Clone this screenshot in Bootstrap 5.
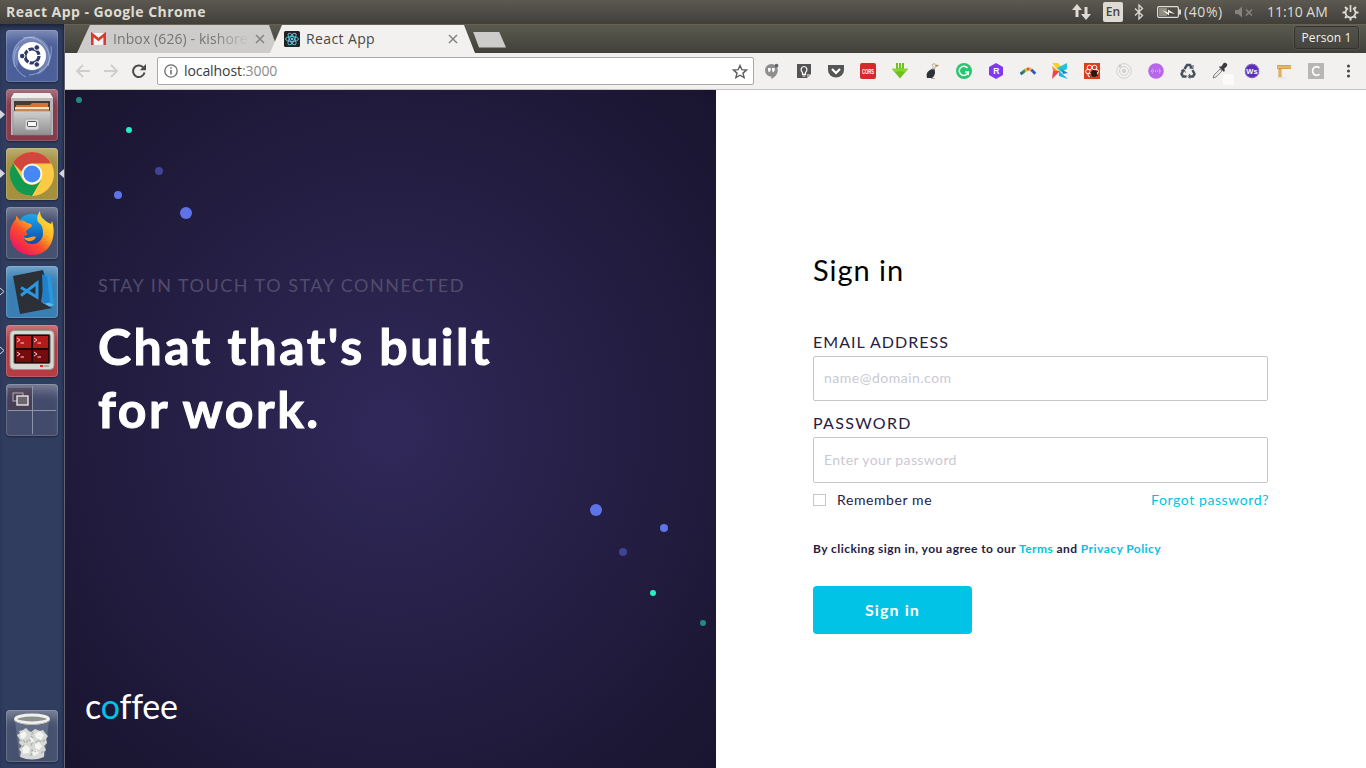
<!DOCTYPE html>
<html lang="en">
<head>
<meta charset="utf-8">
<title>React App</title>
<meta name="viewport" content="width=device-width, initial-scale=1">
<link href="https://cdn.jsdelivr.net/npm/bootstrap@5.3.0/dist/css/bootstrap.min.css" rel="stylesheet">
<style>
  html, body { height: 100%; overflow: hidden; }
  body { font-family: "Open Sans", "Noto Sans", sans-serif; font-size: 14px; line-height: 1.2; background: #fff; }
  svg { display: block; flex: none; overflow: visible; }

  /* system bar */
  .sysbar { height: 24px; background: linear-gradient(#5c5950, #403f3a); color: #dfdbd2; padding-left: 6px; }
  .sys-title { font-weight: 700; font-size: 14px; letter-spacing: .45px; }
  .sys-tray { display: grid; grid-template-columns: 31px 31px 23px 27px 51px 32px 75px 24px; align-items: center; height: 24px; }
  .pct { letter-spacing: .6px; }
  .lang-box { width: 20px; height: 20px; background: #dfdbd2; color: #46443e; border-radius: 2px; font-size: 12px; font-weight: 600; }

  /* launcher */
  .dock { width: 65px; background: #303d5f; border-right: 1px solid #66616d; padding: 6px 0 6px 6px; box-shadow: inset 0 5px 6px -3px #161b33, inset -2px 0 2px -1px #202945; }
  .dock-items { gap: 7px; }
  .tile { width: 52px; height: 52px; border-radius: 4px; position: relative; box-shadow: inset 0 0 0 1px rgba(255,255,255,.16), inset 0 13px 12px -7px rgba(255,255,255,.32), 0 1px 2px rgba(0,0,0,.4); }
  .tile > svg.face { width: 52px; height: 52px; }
  .tile .pip-l { position: absolute; left: -6px; top: 21px; }
  .tile .pip-r { position: absolute; right: -6px; top: 21px; }
  .bg-dash { background: #4b5f99; }
  .bg-files { background: #873a4c; }
  .bg-chrome { background: #a4903e; }
  .bg-plain { background: #46506f; }
  .bg-code { background: #3a7fb4; }
  .bg-term { background: #b33d43; }
  .bg-space { background: #434b6c; }

  /* tab strip */
  .tabstrip { height: 29px; background: linear-gradient(#5a594e, #41413a); padding: 1px 7px 0 12px; border-top: 1px solid #66624f; }
  .tab { height: 28px; margin-top: -1px; }
  .tab-idle { width: 202px; background: #cecccb; color: #767472; clip-path: polygon(0 100%, 13px 0, 192px 0, 100% 100%); padding-left: 14px; }
  .tab-live { width: 205px; margin-left: -9px; background: #f2f1f0; color: #4a4846; clip-path: polygon(0 100%, 12px 0, 194px 0, 100% 100%); padding: 0 17px 0 14px; }
  .tab-name { font-size: 14px; white-space: nowrap; }
  .live-name { margin-left: 6px; letter-spacing: .38px; }
  .fade-name { width: 135px; margin-left: 7px; letter-spacing: .1px; -webkit-mask-image: linear-gradient(90deg, #000 100px, transparent 136px); mask-image: linear-gradient(90deg, #000 100px, transparent 136px); }
  .idle-close { margin-left: 7px; }
  .tab-new { width: 33px; height: 16px; margin: 0 0 0 -2px; background: #cecccb; clip-path: polygon(0 0, 26px 0, 100% 100%, 6px 100%); align-self: center; }
  .person { height: 23px; width: 65px; border: 1px solid #33322d; border-radius: 3px; background: linear-gradient(#54534b, #45443e); color: #f4f2ee; font-size: 12px; padding-top: 2px; box-shadow: 0 0 0 1px rgba(255,255,255,.06); letter-spacing: .1px; }

  /* toolbar */
  .toolbar { height: 37px; background: #f2f1f0; border-bottom: 1px solid #c6c4c2; padding-left: 10px; }
  .omnibox { width: 597px; height: 28px; background: #fff; border: 1px solid #aba9a7; border-radius: 2px; margin-left: 10px; padding: 0 5px 0 6px; font-size: 14px; color: #3a3a3a; }
  .url { margin-left: 6px; letter-spacing: -.08px; }
  .url-port { color: #8b8b8b; }
  .ext-row { gap: 16px; margin-left: 10px; }

  /* page */
  .page { font-family: "Lato", "Open Sans", sans-serif; }
  .hero { width: 651px; background: radial-gradient(ellipse farthest-corner at center, #30295a, #19142e); position: relative; color: #fff; padding: 184px 0 0 33px; }
  .hero-dots { position: absolute; inset: 0; }
  .hero-tag { font-size: 18px; line-height: 22px; color: #514c6c; letter-spacing: 1.5px; }
  .hero-head { font-size: 50px; line-height: 63px; font-weight: 700; margin: 19px 0 0; letter-spacing: 2.48px; -webkit-text-stroke: 1px #fff; }
  .brand { position: absolute; left: 20px; bottom: 42px; font-size: 34px; line-height: 40px; font-weight: 400; letter-spacing: -.2px; }
  .cyan { color: #00c3e6; text-decoration: none; }
  .signin { width: 456px; margin-left: 97px; padding-top: 161px; color: #27203f; }
  .signin-title { font-size: 29px; line-height: 38px; font-weight: 400; color: #000; margin: 0 0 43px; letter-spacing: .95px; }
  .field-label { font-size: 16px; line-height: 20px; display: block; letter-spacing: 1.04px; }
  .label-pass { margin-top: 12px; letter-spacing: 1.3px; }
  .signin .form-control { width: 455px; height: 45px; border: 1px solid #c5c5cc; border-radius: 2px; padding: 0 10px 2px; font-size: 14px; font-weight: 400; margin-top: 4px; letter-spacing: .5px; }
  .signin .form-control.pass-input { height: 46px; padding-bottom: 1px; letter-spacing: .38px; }
  .signin .form-control::placeholder { color: #cbc9d3; opacity: 1; }
  .box-check { width: 13px; height: 12px; border: 1px solid #c4c9c9; background: #fff; margin-right: 11px; }
  .small-row { font-size: 14px; line-height: 18px; margin-top: 8px; letter-spacing: .59px; }
  .legal { font-size: 12px; line-height: 16px; font-weight: 700; margin-top: 32px; letter-spacing: .44px; white-space: nowrap; }
  .btn-go { width: 159px; height: 48px; background: #00c3e6; color: #fff; border: 0; border-radius: 4px; font-size: 16px; font-weight: 700; margin-top: 29px; letter-spacing: 1.1px; }
</style>
</head>
<body class="d-flex flex-column">

<header class="sysbar d-flex align-items-center justify-content-between">
  <span class="sys-title">React App - Google Chrome</span>
  <div class="sys-tray">
    <svg width="19" height="18" viewBox="0 0 19 18" fill="#dfdbd2"><path d="M5 1 0 7h3.500v7h3V7H10zM14 17l5-6h-3.500V4h-3v7H9z"/></svg>
    <span class="lang-box d-flex align-items-center justify-content-center">En</span>
    <svg width="10" height="16" viewBox="0 0 10 16" fill="none" stroke="#dfdbd2" stroke-width="1.300"><path d="M1 4.500 8.500 11.500 5 15V1l3.500 3.500L1 11.500"/></svg>
    <svg width="24" height="12" viewBox="0 0 24 12"><rect x=".6" y=".6" width="20.800" height="10.800" rx="1.500" fill="none" stroke="#dfdbd2" stroke-width="1.200"/><rect x="22" y="3.500" width="2" height="5" fill="#dfdbd2"/><rect x="2" y="2" width="8" height="8" fill="#8f8c84"/><path d="m5 4 6 2.500V3.500L18 8l-6-1.500V9.500z" fill="#f3efe6"/></svg>
    <span class="pct">(40%)</span>
    <svg width="18" height="12" viewBox="0 0 18 12" fill="#85837c"><path d="M0 4h3l4-3.500v11L3 8H0z"/><path d="m11 3.500 6 6m0-6-6 6" stroke="#85837c" stroke-width="1.700"/></svg>
    <span>11:10 AM</span>
    <svg width="17" height="17" viewBox="0 0 17 17" fill="none" stroke="#dfdbd2"><path d="M6 4.300a5 5 0 1 0 5 0" stroke-width="1.800"/><path d="M8.500 1v7" stroke-width="1.700"/><path d="m3 3 1.800 1.800M14 3l-1.800 1.800M.5 8.500H3m11 0h2.500M3 14l1.800-1.800M14 14l-1.800-1.800M8.500 14v2.500" stroke-width="2"/></svg>
  </div>
</header>

<div class="d-flex flex-grow-1">
  <nav class="dock d-flex flex-column justify-content-between">
    <div class="dock-items d-flex flex-column">
      <div class="tile bg-dash">
        <svg class="face" viewBox="0 0 52 52"><path d="M12 38C3 24 8 9 25 7c11-1 19 7 19 19 0 9-5 16-13 19 6-10 5-30-5-33-10 0-15 10-14 26z" fill="#a9b8dc" opacity=".4"/><g fill="none" stroke="#c3cfe8" stroke-width="1" opacity=".6"><path d="M9 37C2 20 13 6 29 7M17 8C34 4 48 20 42 36M45 16c2 16-7 28-22 29M20 47C6 40 5 25 13 16"/></g><circle cx="26" cy="26" r="15" fill="#7283b3" opacity=".7"/><circle cx="26" cy="26" r="14" fill="#fff"/><circle cx="26" cy="26" r="7" fill="none" stroke="#2d3b68" stroke-width="3.200" stroke-dasharray="13.200 1.460"/><g fill="#2d3b68" stroke="#fff" stroke-width="1"><circle cx="16.200" cy="26" r="2.800"/><circle cx="30.800" cy="17.500" r="2.800"/><circle cx="30.800" cy="34.500" r="2.800"/></g></svg>
      </div>
      <div class="tile bg-files">
        <svg class="pip-l" width="5" height="9"><path d="M0 0l5 4.500L0 9z" fill="#d5d7dd"/></svg>
        <svg class="face" viewBox="0 0 52 52"><defs><linearGradient id="cab" x2="0" y2="1"><stop stop-color="#d0d0d0"/><stop offset="1" stop-color="#8f8f8f"/></linearGradient></defs><path d="M8 4h36l3 5v37H5V9z" fill="#b9b9b9"/><path d="M8 4h36l3 5H5z" fill="#eee"/><rect x="8" y="12" width="36" height="11" fill="#4a3a35"/><path d="M10 16h14l2-2h16v8H10z" fill="#d9702f"/><path d="M9 18h34v4H9z" fill="#f4e3c4"/><path d="M9 20h34v2H9z" fill="#d98547"/><rect x="7" y="22" width="38" height="24" rx="1" fill="url(#cab)" stroke="#888" stroke-width=".6"/><rect x="19" y="30" width="14" height="11" rx="2" fill="#d9d9d9" stroke="#a5a5a5"/><rect x="21.500" y="32.500" width="9" height="5" rx="1" fill="#f8f8f8" stroke="#555"/></svg>
      </div>
      <div class="tile bg-chrome">
        <svg class="pip-l" width="5" height="9"><path d="M0 0l5 4.500L0 9z" fill="#d5d7dd"/></svg>
        <svg class="pip-r" width="5" height="9"><path d="M5 0L0 4.500 5 9z" fill="#d5d7dd"/></svg>
        <svg class="face" viewBox="0 0 52 52"><circle cx="26" cy="26" r="22" fill="#fdca45"/><path d="M6.900 15A22 22 0 0 0 26 48l9.500-16.500a11 11 0 0 1-19 0z" fill="#12994f"/><path d="M7 15c4-7 11-11 19-11s15 4 19 11.500H26a11 11 0 0 0-10.500 8z" fill="#d3463e"/><circle cx="26" cy="26" r="10.300" fill="#fff"/><circle cx="26" cy="26" r="8.500" fill="#4487f5"/></svg>
      </div>
      <div class="tile bg-plain">
        <svg class="face" viewBox="0 0 52 52"><defs><linearGradient id="ffx" x1=".9" y1="0" x2=".15" y2=".9"><stop stop-color="#fff24b"/><stop offset=".38" stop-color="#ffb623"/><stop offset=".65" stop-color="#fb4d2e"/><stop offset="1" stop-color="#ee1561"/></linearGradient><linearGradient id="ffb" x2="0" y2="1"><stop stop-color="#18a9f0"/><stop offset="1" stop-color="#0c3e9c"/></linearGradient></defs><circle cx="26" cy="24" r="17" fill="url(#ffb)"/><path d="M34 4c0 6 3 8 7 11l4 2 1-3C51 29 45 48 26 48 12 48 3 38 4 26c0-6 2-9 6-14V9c2 1 3 3 4 5 3-1 5 0 7 2l4 1 1 2c-1 2-5 3-6 5 0 2 2 3 1 4l-3 1c-1 4 3 8 8 8 7 0 11-5 11-11 0-5-1-8-4-10-3-3-2-8 1-12z" fill="url(#ffx)"/><path d="M17 30c6 3 8-2 13 0-2 5-9 6-13 0z" fill="#ff9b2e"/></svg>
      </div>
      <div class="tile bg-code">
        <svg class="pip-l" width="5" height="9"><path d="M0 1l4 3.500L0 8" fill="none" stroke="#d5d7dd"/></svg>
        <svg class="face" viewBox="0 0 52 52"><path d="m37 7 8 3 3 29-8 3z" fill="#2b95de"/><path d="m16 38 28-1 4 2-8 3-24-2z" fill="#62b6ed"/><path d="M7 10 37 4l2 8-4 24 11 6-32 6z" fill="#2c2f35"/><path d="m36 8 5 3 3 25-7 2z" fill="#1e81cc"/><path d="M15 21.500 31 31V17L15 29.500" fill="none" stroke="#2a96e4" stroke-width="3"/></svg>
      </div>
      <div class="tile bg-term">
        <svg class="pip-l" width="5" height="9"><path d="M0 1l4 3.500L0 8" fill="none" stroke="#d5d7dd"/></svg>
        <svg class="face" viewBox="0 0 52 52"><rect x="4" y="5.500" width="44" height="39" rx="4" fill="#d8d8d2" stroke="#999791"/><rect x="7.500" y="9" width="37" height="30" rx="2" fill="#5b5955"/><rect x="8.500" y="10" width="35" height="28" fill="#230708"/><path d="M10 11h15v12H10zM27 11h15v12H27z" fill="#b31a1c"/><path d="M10 25h15v12H10zM27 25h15v12H27z" fill="#760b0e"/><g fill="none" stroke="#f3d6d6" stroke-width="1"><path d="m11 13 3 2-3 2m3.500 1H18M28 13l3 2-3 2m3.500 1H35M11 27l3 2-3 2m3.500 1H18M28 27l3 2-3 2m3.500 1H35"/></g><rect x="34" y="40" width="3" height="2" fill="#e21"/><rect x="38" y="40" width="5" height="2" fill="#aaa"/></svg>
      </div>
      <div class="tile bg-space">
        <svg class="face" viewBox="0 0 52 52"><path d="M2 4h24v22H2z" fill="#4a3543" opacity=".55"/><path d="M26.500 2v48M2 26.500h48" stroke="#8d93a9"/><rect x="7" y="9" width="10" height="8" fill="none" stroke="#b4aeb6"/><rect x="11" y="12" width="11" height="9" fill="#6e6470" stroke="#eee" stroke-width="1.300"/></svg>
      </div>
    </div>
    <div class="tile bg-plain">
      <svg class="face" viewBox="0 0 52 52"><path d="m9 10 4 36q13 4 26 0l4-36z" fill="#8c95a8" opacity=".4"/><path d="m11 25 3-2-1-2 4-1 3-2 3 3 2 1 4-3 5 2 3-1 2 3 3 3-2 3 1 4-3 3 2 4-2 2v5q-12 5-24 0l1-5-2-3 3-3-3-3 1-3z" fill="#d6d8d3"/><path d="m14 24 4-3 3 3-2 4-4 1zm15 0 5-3 4 4-3 5-5-2zM16 38l4-3 4 3-1 5-6 1zm13-4 4-2 3 4-3 4-4-2zM23 29l3-2 2 4-3 2zm3 13 4-2 3 3-5 3z" fill="#f4f5f2"/><path d="m13 31 4-1 3 3 3-4 3 4-1 3m2-14-2 4 3 3m11 1-4 2-3-2-2 3M18 35l-3 4m10 7 1-6 4 2m7-1-2 3" fill="none" stroke="#a9ada7" stroke-width="1.200" stroke-dasharray="3 1.500"/><ellipse cx="26" cy="9" rx="16.500" ry="4" fill="#8e928f" stroke="#f1f1ee" stroke-width="3"/><path d="M8 10c7 6 29 6 36 0" fill="none" stroke="#babab5"/></svg>
    </div>
  </nav>

  <div class="flex-grow-1 d-flex flex-column">
    <div class="tabstrip d-flex justify-content-between">
      <div class="d-flex">
        <div class="tab tab-idle d-flex align-items-center">
          <svg width="15" height="12" viewBox="0 0 15 12"><rect width="15" height="12" rx="1" fill="#f3f3f3"/><path d="M1.300 12V1.500l6.200 5 6.200-5V12" fill="none" stroke="#d93a2c" stroke-width="2.600"/></svg>
          <span class="tab-name fade-name">Inbox (626) - kishore</span>
          <svg class="idle-close" width="10" height="10" viewBox="0 0 10 10"><path d="m1 1 8 8m0-8-8 8" stroke="#858382" stroke-width="1.500"/></svg>
        </div>
        <div class="tab tab-live d-flex align-items-center">
          <svg width="16" height="16" viewBox="0 0 16 16"><rect width="16" height="16" rx="1.500" fill="#222"/><g fill="none" stroke="#5ccbe6" stroke-width=".9"><ellipse cx="8" cy="8" rx="6.500" ry="2.500"/><ellipse cx="8" cy="8" rx="6.500" ry="2.500" transform="rotate(60 8 8)"/><ellipse cx="8" cy="8" rx="6.500" ry="2.500" transform="rotate(120 8 8)"/></g><circle cx="8" cy="8" r="1.300" fill="#5ccbe6"/></svg>
          <span class="tab-name live-name">React App</span>
          <svg class="ms-auto" width="10" height="10" viewBox="0 0 10 10"><path d="m1 1 8 8m0-8-8 8" stroke="#858382" stroke-width="1.500"/></svg>
        </div>
        <div class="tab-new"></div>
      </div>
      <div class="person d-flex align-items-center justify-content-center">Person 1</div>
    </div>

    <div class="toolbar d-flex align-items-center">
      <svg width="72" height="16" viewBox="0 0 72 16" fill="none"><path d="M15 8H2m6-6L2 8l6 6M29 8h13m-6-6 6 6-6 6" stroke="#cfcecd" stroke-width="1.900"/><path d="M69.500 9.500A5.800 5.800 0 1 1 68 4.200" stroke="#4b4b4b" stroke-width="2"/><path d="M71 1v6.200h-6.200z" fill="#4b4b4b"/></svg>
      <div class="omnibox d-flex align-items-center">
        <svg width="14" height="14" viewBox="0 0 14 14"><circle cx="7" cy="7" r="6.200" fill="none" stroke="#6b6b6b" stroke-width="1.300"/><path d="M7 6v4.500M7 3.200v1.600" stroke="#6b6b6b" stroke-width="1.500"/></svg>
        <span class="url">localhost<span class="url-port">:3000</span></span>
        <svg class="ms-auto" width="16" height="15" viewBox="0 0 16 15"><path d="m8 1.500 1.900 4.200 4.600.4-3.500 3 1.100 4.500L8 11.200l-4.100 2.400L5 9.100l-3.500-3 4.600-.4z" fill="none" stroke="#5c5c5c" stroke-width="1.400"/></svg>
      </div>
      <div class="ext-row d-flex align-items-center">
        <svg width="16" height="16" viewBox="0 0 16 16"><path d="M7.300 1a6.300 6.300 0 0 0 0 12.600V16c4-2 6.500-5 6.500-9A6.300 6.300 0 0 0 7.300 1z" fill="#8e8e8e"/><path d="M4 5h2.700v2.500L5.300 9.200H4.500V7.500H4zm4 0h2.700v2.500L9.300 9.200h-.8V7.500H8z" fill="#fff"/><circle cx="12.500" cy="2.700" r="1.900" fill="#666"/></svg>
        <svg width="16" height="16" viewBox="0 0 16 16"><path d="M1 1h14v10l-4 4H1z" fill="#545454"/><path d="M11 15v-4h4z" fill="#aaa"/><path d="M6.500 9.500C4 7.500 5 3.500 8 3.500s4 4 1.500 6v1.800h-3z" fill="none" stroke="#fff" stroke-width="1.200"/><path d="M6.500 13h3" stroke="#fff"/></svg>
        <svg width="16" height="16" viewBox="0 0 16 16"><path d="M0 2h16v5a8 7.500 0 0 1-16 0z" fill="#555"/><path d="m4 6 4 4 4-4" fill="none" stroke="#fff" stroke-width="2.200"/></svg>
        <svg width="16" height="16" viewBox="0 0 16 16"><rect width="16" height="16" rx="2" fill="#d22b2a"/><text x="2" y="10.500" font-size="7" font-weight="700" font-family="Liberation Sans" fill="#fff" textLength="12" lengthAdjust="spacingAndGlyphs">CORS</text></svg>
        <svg width="16" height="16" viewBox="0 0 16 16"><path d="M4 0h2v5h1V0h2v5h1V0h2v6h4L8 15.500 0 6h4z" fill="#6fc01d"/><path d="M0 5.500h16L13.500 9 8 8l-5.500 1z" fill="#86d735"/></svg>
        <svg width="16" height="16" viewBox="0 0 16 16"><path d="M6 7c2-1 3-2 4-2 2 4 1 8-2 10H3c-1-4 0-6 3-8z" fill="#2c3237"/><path d="M8 2c1-2 4-1.500 4 .5L10.500 6l-2 .5.700-3z" fill="#eee9df" stroke="#777" stroke-width=".5"/><path d="m12 2 2.500.5L12 3.500zM7 15.500h4" fill="#b48b42" stroke="#b48b42" stroke-width=".7"/></svg>
        <svg width="16" height="16" viewBox="0 0 16 16"><circle cx="8" cy="8" r="8" fill="#29c56f"/><path d="M11.500 5A4.600 4.600 0 1 0 12.300 9H9m3.300 0v3" fill="none" stroke="#fff" stroke-width="1.500"/></svg>
        <svg width="16" height="16" viewBox="0 0 16 16"><path d="m8 0 7 4v8l-7 4-7-4V4z" fill="#8038f5"/><text x="5.200" y="11" font-size="8.500" font-weight="700" font-family="Liberation Sans" fill="#fff">R</text></svg>
        <svg width="16" height="16" viewBox="0 0 16 16" fill="none" stroke-width="2.800"><path d="M.5 11 4 8.500" stroke="#2a6e8a"/><path d="m3 9.200 3-2.500" stroke="#37964b"/><path d="m5 7.600 2.200-1.400" stroke="#f2b72d"/><path d="m6.800 6.200 3-.2" stroke="#e24b3a"/><path d="m9.300 5.700 2.500 1.400" stroke="#f2b72d"/><path d="m11.300 6.700 4 4" stroke="#2e5bc0"/></svg>
        <svg width="16" height="16" viewBox="0 0 16 16"><path d="M0 0h6l4 5-3 3z" fill="#ffcf20"/><path d="M5 5 15 0v6l-6 3z" fill="#24c3d6"/><path d="m9 6 7 4-5 1z" fill="#247fd0"/><path d="m7 8 9 8-9-3z" fill="#16b5e6"/><path d="M1 8h7l-8 8z" fill="#ef3f50"/><path d="M0 3 6 8H1z" fill="#fb8d22"/></svg>
        <svg width="16" height="16" viewBox="0 0 16 16"><rect width="16" height="16" fill="#dc3d1a"/><g fill="none" stroke="#fff" stroke-width="1"><circle cx="5.500" cy="4.500" r="2.300"/><circle cx="10.500" cy="4.500" r="2.300"/><circle cx="4" cy="8.500" r="2.300"/><circle cx="12" cy="8.500" r="2.300"/><circle cx="6" cy="11.800" r="2"/></g><ellipse cx="10" cy="10.500" rx="3" ry="3.500" fill="#251a18"/><path d="m6 9 8 4m0-5-8 6" stroke="#251a18"/></svg>
        <svg width="16" height="16" viewBox="0 0 16 16" fill="none" stroke="#d2d1d0"><circle cx="8" cy="8" r="7.300"/><circle cx="8" cy="8" r="4.500"/><circle cx="8" cy="8" r="1.700" fill="#d2d1d0"/><circle cx="4" cy="3" r="1.200" fill="#c5c4c3"/></svg>
        <svg width="16" height="16" viewBox="0 0 16 16"><circle cx="8" cy="8" r="7.800" fill="#b767e9"/><path d="M3 8h10" stroke="#f3ddff" stroke-dasharray="1 1"/><path d="M5 5.500 3.500 8 5 10.500m6-5L12.500 8 11 10.500" fill="none" stroke="#dba9f7" stroke-width=".8"/></svg>
        <svg width="16" height="16" viewBox="0 0 16 16" fill="none" stroke="#49515c" stroke-width="2.500"><path d="M4.500 6 7 2h3l1.500 3M12.500 7l2 4-1.500 2.500H9M6.500 13.500H3L1.500 11l2-4"/><path d="m9.500 5 3.500.5V2M10 11l-2 2.500 2 2.200M1 7.500l3-1 1.500 3" stroke-width="1"/></svg>
        <svg width="16" height="16" viewBox="0 0 16 16"><path d="M11 11h11v11H11z" fill="#fafafa"/><path d="m1 15 1-3 6-6 2 2-6 6z" fill="#e6e6e6" stroke="#777" stroke-width=".9"/><path d="m7 4 5 5 1-2-1-1 3-3q1-2-1-3t-3 1L9 4 8 3z" fill="#3c3c3e"/></svg>
        <svg width="16" height="16" viewBox="0 0 16 16"><circle cx="8" cy="8" r="7.200" fill="#5a30b5"/><circle cx="8" cy="8" r="6.700" fill="none" stroke="#8a64d2"/><text x="2.200" y="10.800" font-size="7.500" font-weight="700" font-family="Liberation Sans" fill="#fff" textLength="11.500">Ws</text></svg>
        <svg width="16" height="16" viewBox="0 0 16 16"><path d="M4 2v12" stroke="#d79a3c" stroke-width="3"/><path d="M1 4h14" stroke="#dba04a" stroke-width="4"/><path d="M1 4h14M4 7v6" stroke="#f0cb85"/><path d="M1 15h9" stroke="#ddd"/></svg>
        <svg width="16" height="16" viewBox="0 0 16 16"><rect width="16" height="16" fill="#b7b6b5"/><path d="M11.500 5a4 4.300 0 1 0 0 6" fill="none" stroke="#fff" stroke-width="1.700"/></svg>
        <svg width="16" height="16" viewBox="0 0 16 16" fill="#4b4b4b"><circle cx="8.500" cy="3" r="1.600"/><circle cx="8.500" cy="8" r="1.600"/><circle cx="8.500" cy="13" r="1.600"/></svg>
      </div>
    </div>

    <main class="page d-flex flex-grow-1">
      <section class="hero">
        <svg class="hero-dots" width="651" height="678" viewBox="0 0 651 678"><g fill="#27efc3"><circle cx="64" cy="40" r="3"/><circle cx="588" cy="503" r="3"/></g><g fill="#248980"><circle cx="14" cy="10" r="3"/><circle cx="638" cy="533" r="3"/></g><g fill="#414494"><circle cx="94" cy="81" r="4"/><circle cx="558" cy="462" r="4"/></g><g fill="#5f73e8"><circle cx="53" cy="105" r="4"/><circle cx="121" cy="123" r="6"/><circle cx="531" cy="420" r="6"/><circle cx="599" cy="438" r="4"/></g></svg>
        <div class="hero-tag">STAY IN TOUCH TO STAY CONNECTED</div>
        <h1 class="hero-head">Chat that's built<br>for work.</h1>
        <div class="brand">c<span class="cyan">o</span>ffee</div>
      </section>

      <form class="signin">
        <h2 class="signin-title">Sign in</h2>
        <label class="field-label" for="email">EMAIL ADDRESS</label>
        <input class="form-control" id="email" type="email" placeholder="name@domain.com">
        <label class="field-label label-pass" for="pass">PASSWORD</label>
        <input class="form-control pass-input" id="pass" type="password" placeholder="Enter your password">
        <div class="small-row d-flex align-items-center">
          <span class="box-check"></span><span>Remember me</span>
          <a class="cyan ms-auto" href="#">Forgot password?</a>
        </div>
        <div class="legal">By clicking sign in, you agree to our <a class="cyan" href="#">Terms</a> and <a class="cyan" href="#">Privacy Policy</a></div>
        <button class="btn btn-go" type="button">Sign in</button>
      </form>
    </main>
  </div>
</div>
<script src="https://cdn.jsdelivr.net/npm/bootstrap@5.3.0/dist/js/bootstrap.bundle.min.js"></script>
</body>
</html>
